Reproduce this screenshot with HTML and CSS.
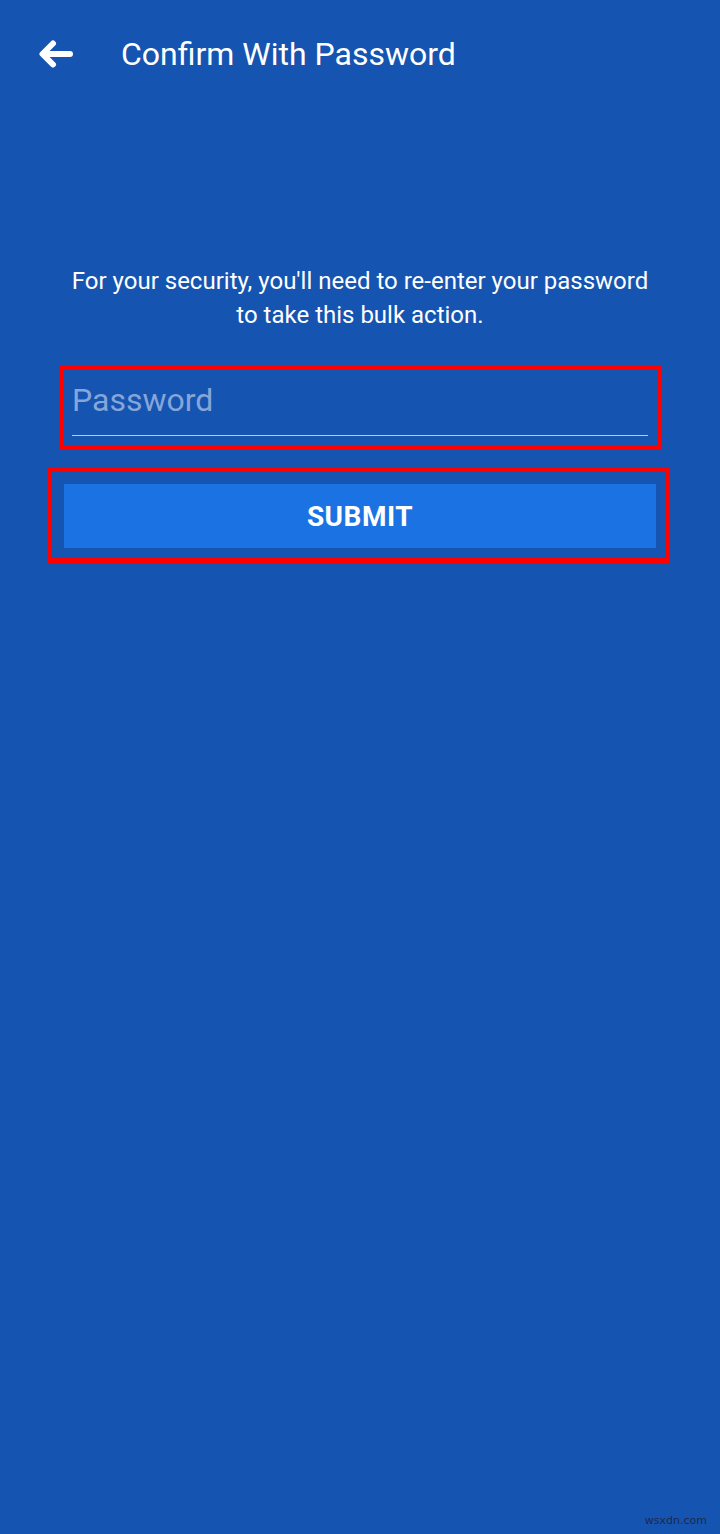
FILE: index.html
```html
<!DOCTYPE html>
<html lang="en">
<head>
<meta charset="utf-8">
<title>Confirm With Password</title>
<link rel="stylesheet" href="styles.css">
</head>
<body>
<div class="screen">
  <header class="app-bar">
    <svg class="back" width="34" height="28" viewBox="0 0 34 28" aria-hidden="true">
      <path d="M31 14H4 M14 3.5L3.5 14L14 24.5" fill="none" stroke="#ffffff" stroke-width="6" stroke-linecap="round" stroke-linejoin="round"/>
    </svg>
    <h1 class="title">Confirm With Password</h1>
  </header>
  <main class="content">
    <p class="notice">For your security, you'll need to re-enter your password<br>to take this bulk action.</p>
    <div class="field-box">
      <div class="field"><span class="placeholder">Password</span></div>
    </div>
    <div class="submit-box">
      <div class="submit">SUBMIT</div>
    </div>
  </main>
  <div class="watermark">wsxdn.com</div>
</div>
</body>
</html>
```

FILE: styles.css
```css
html, body {
  margin: 0;
  padding: 0;
  background: #1554b0;
}
.screen {
  position: relative;
  width: 720px;
  height: 1534px;
  background: #1554b0;
  font-family: Roboto, "Noto Sans", "Liberation Sans", sans-serif;
  color: #ffffff;
  overflow: hidden;
}
.app-bar {
  height: 108px;
  display: flex;
  align-items: center;
  padding-left: 39px;
}
.back {
  display: block;
  flex: none;
}
.title {
  margin: 0 0 0 48px;
  font-size: 32px;
  font-weight: 400;
  line-height: normal;
  color: #ffffff;
}
.content {
  display: flex;
  flex-direction: column;
}
.notice {
  margin: 156px 0 0 0;
  text-align: center;
  font-size: 24px;
  line-height: 34px;
  color: #ffffff;
}
.field-box {
  margin: 34px 0 0 60px;
  width: 601px;
  box-sizing: border-box;
  border: 4px solid #ff0000;
  padding: 0 9px 10px 8px;
}
.field {
  border-bottom: 1px solid #b9cbec;
  padding: 12px 0 17px 0;
}
.placeholder {
  display: block;
  font-size: 32px;
  line-height: 36px;
  color: #86a6da;
}
.submit-box {
  margin: 18px 0 0 47px;
  width: 623px;
  box-sizing: border-box;
  border: 5px solid #ff0000;
  border-top-width: 4px;
  padding: 12px 9px 10px 12px;
}
.submit {
  height: 64px;
  background: #1b72e2;
  display: flex;
  align-items: center;
  justify-content: center;
  font-size: 28px;
  font-weight: 700;
  letter-spacing: 0.5px;
  color: #ffffff;
}
.watermark {
  position: absolute;
  right: 13px;
  bottom: 7px;
  font-family: "DejaVu Sans", "Liberation Sans", sans-serif;
  font-size: 11px;
  color: #1b2a4e;
}
```
